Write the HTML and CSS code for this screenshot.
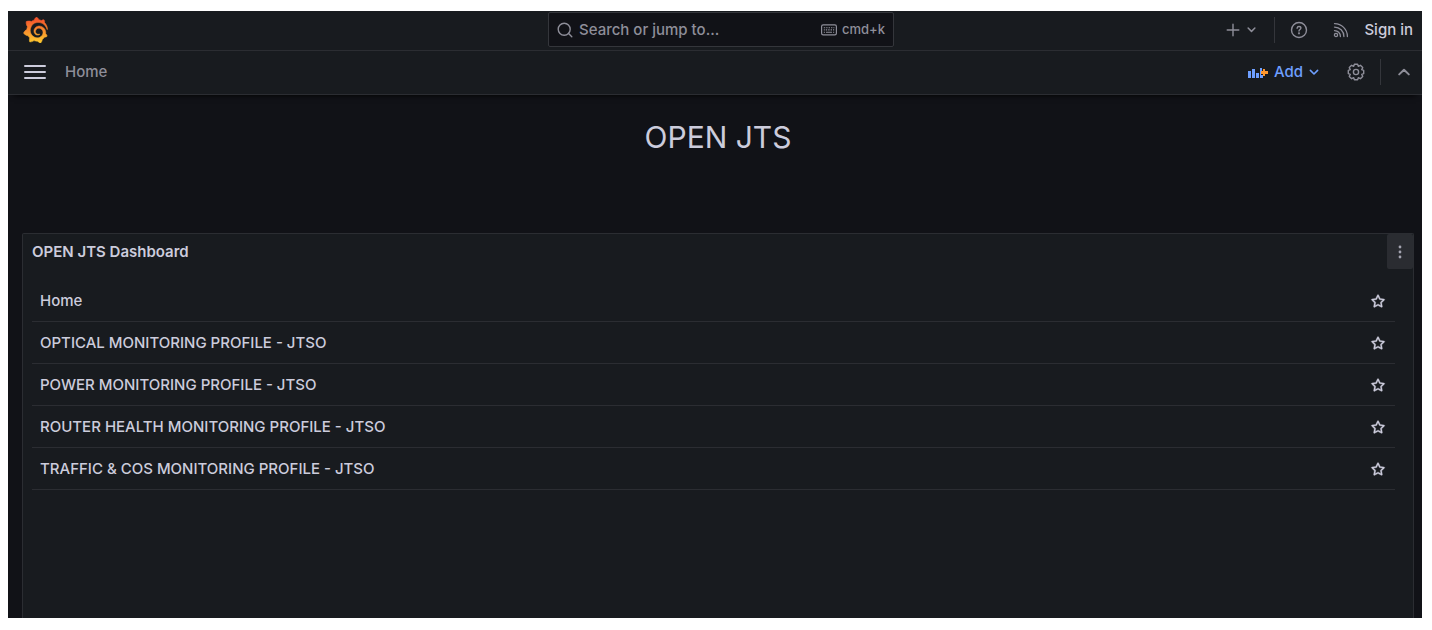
FILE: index.html
```html
<!DOCTYPE html>
<html lang="en">
<head>
<meta charset="utf-8">
<meta name="viewport" content="width=device-width, initial-scale=1">
<title>Home - Dashboards</title>
<link rel="stylesheet" href="styles.css">
</head>
<body>
<svg class="sprite" aria-hidden="true">
  <symbol id="star" viewBox="0 0 24 24"><path d="M22,9.67A1,1,0,0,0,21.14,9l-5.69-.83L12.9,3a1,1,0,0,0-1.8,0L8.55,8.16,2.86,9a1,1,0,0,0-.81.68,1,1,0,0,0,.25,1l4.13,4-1,5.68A1,1,0,0,0,6.9,21.44L12,18.77l5.1,2.67a.93.93,0,0,0,.46.12,1,1,0,0,0,.59-.19,1,1,0,0,0,.4-1l-1-5.68,4.13-4A1,1,0,0,0,22,9.67Zm-6.15,4a1,1,0,0,0-.29.88l.72,4.2-3.76-2a1.06,1.06,0,0,0-.94,0l-3.76,2,.72-4.2a1,1,0,0,0-.29-.88l-3-3,4.21-.61a1,1,0,0,0,.76-.55L12,5.7l1.88,3.82a1,1,0,0,0,.76.55l4.21.61Z" fill="currentColor" stroke="currentColor" stroke-width=".5"/></symbol>
  <symbol id="down" viewBox="0 0 16 16"><path d="M4.4 6.4 8 10l3.6-3.6" fill="none" stroke="currentColor" stroke-width="1.6" stroke-linecap="round" stroke-linejoin="round"/></symbol>
</svg>
<div class="app">
  <header class="topbar">
    <a class="logo" href="#" aria-label="Grafana">
      <svg viewBox="0 0 351 365" width="25" height="26">
        <defs><linearGradient id="flame" gradientUnits="userSpaceOnUse" x1="175" y1="400" x2="175" y2="40"><stop offset="0" stop-color="#ffd92e"/><stop offset="1" stop-color="#f5562c"/></linearGradient></defs>
        <path fill="url(#flame)" stroke="url(#flame)" stroke-width="8" d="M342,161.2c-0.6-6.1-1.6-13.1-3.6-20.9c-2-7.7-5-16.2-9.4-25c-4.4-8.8-10.1-17.9-17.5-26.8c-2.9-3.5-6.1-6.9-9.5-10.2c5.1-20.3-6.2-37.9-6.2-37.9c-19.5-1.2-31.9,6.1-36.5,9.4c-0.8-0.3-1.5-0.7-2.3-1c-3.3-1.3-6.7-2.6-10.3-3.7c-3.5-1.1-7.1-2.1-10.8-3c-3.7-0.9-7.4-1.6-11.2-2.2c-0.7-0.1-1.3-0.2-2-0.3c-8.5-27.2-32.9-38.6-32.9-38.6c-27.3,17.3-32.4,41.5-32.4,41.5s-0.1,0.5-0.3,1.4c-1.5,0.4-3,0.9-4.5,1.3c-2.1,0.6-4.2,1.4-6.2,2.2c-2.1,0.8-4.1,1.6-6.2,2.5c-4.1,1.8-8.2,3.8-12.2,6c-3.9,2.2-7.7,4.6-11.4,7.1c-0.5-0.2-1-0.4-1-0.4c-37.8-14.4-71.3,2.9-71.3,2.9c-3.1,40.2,15.1,65.5,18.7,70.1c-0.9,2.5-1.7,5-2.5,7.5c-2.8,9.1-4.9,18.4-6.2,28.1c-0.2,1.4-0.4,2.8-0.5,4.2C18.8,192.7,8.5,228,8.5,228c29.1,33.5,63.1,35.6,63.1,35.6c0,0,0.1-0.1,0.1-0.1c4.3,7.7,9.3,15,14.9,21.9c2.4,2.9,4.8,5.6,7.4,8.3c-10.6,30.4,1.5,55.6,1.5,55.6c32.4,1.2,53.7-14.2,58.2-17.7c3.2,1.1,6.5,2.1,9.8,2.9c10,2.6,20.2,4.1,30.4,4.5c2.5,0.1,5.1,0.2,7.6,0.1l1.2,0l0.8,0l1.6,0l1.6-0.1l0,0.1c15.3,21.8,42.1,24.9,42.1,24.9c19.1-20.1,20.2-40.1,20.2-44.4l0,0c0,0,0-0.1,0-0.3c0-0.4,0-0.6,0-0.6l0,0c0-0.3,0-0.6,0-0.9c4-2.8,7.8-5.8,11.4-9.1c7.6-6.9,14.3-14.8,19.9-23.3c0.5-0.8,1-1.6,1.5-2.4c21.6,1.2,36.9-13.4,36.9-13.4c-3.6-22.5-16.4-33.5-19.1-35.6l0,0c0,0-0.1-0.1-0.3-0.2c-0.2-0.1-0.2-0.2-0.2-0.2c-0.1-0.1-0.3-0.2-0.5-0.3c0.1-1.4,0.2-2.7,0.3-4.1c0.2-2.4,0.2-4.9,0.2-7.3l0-1.8l0-0.9l0-0.5l-0.1-2.1l-0.1-2c0-0.7-0.1-1.3-0.2-1.9c-0.1-0.6-0.1-1.3-0.2-1.9l-0.2-1.9l-0.3-1.9c-0.4-2.5-0.8-4.9-1.4-7.4c-2.3-9.7-6.1-18.9-11-27.2c-5-8.3-11.2-15.6-18.3-21.8c-7-6.2-14.9-11.2-23.1-14.9c-8.3-3.7-16.9-6.1-25.5-7.2c-4.3-0.6-8.6-0.8-12.9-0.7l-1.6,0l-0.9,0l-0.7,0l-1.6,0.1c-0.6,0-1.2,0.1-1.7,0.1c-2.2,0.2-4.4,0.5-6.5,0.9c-8.6,1.6-16.7,4.7-23.8,9c-7.1,4.3-13.3,9.6-18.3,15.6c-5,6-8.9,12.7-11.6,19.6c-2.7,6.9-4.2,14.1-4.6,21c-0.1,1.7-0.1,3.5-0.1,5.2c0,0.4,0,0.9,0,1.3l0.1,1.4c0.1,0.8,0.1,1.7,0.2,2.5c0.3,3.5,1,6.9,1.9,10.1c1.9,6.5,4.9,12.4,8.6,17.4c3.7,5,8.2,9.1,12.9,12.4c4.7,3.2,9.8,5.5,14.8,7c5,1.5,10,2.1,14.7,2.1c0.6,0,1.2,0,1.7,0c0.6,0,1.2,0,1.8-0.1c0.5,0,1-0.1,1.5-0.1c0.6-0.1,1.2-0.2,1.8-0.3c0.6-0.1,1.1-0.2,1.7-0.3c0.6-0.1,1.1-0.2,1.6-0.4c1.1-0.2,2.1-0.6,3.1-0.9c2-0.7,4-1.5,5.7-2.4c1.8-0.9,3.4-2,5-3c0.4-0.3,0.9-0.6,1.3-1c1.6-1.3,1.9-3.7,0.6-5.3c-1.1-1.4-3.1-1.8-4.7-0.9c-0.4,0.2-0.8,0.4-1.2,0.6c-1.4,0.7-2.8,1.3-4.3,1.8c-1.5,0.5-3.1,0.9-4.7,1.2c-0.8,0.1-1.6,0.2-2.5,0.3c-0.4,0-0.8,0.1-1.3,0.1c-0.8,0-1.6,0-2.4,0c-0.5,0-1,0-1.5-0.1l-0.5,0c-0.2,0-0.5,0-0.7-0.1c-0.5-0.1-0.9-0.1-1.4-0.2c-3.7-0.5-7.4-1.6-10.9-3.2c-3.6-1.6-7-3.8-10.1-6.6c-3.1-2.8-5.8-6.1-7.9-9.9c-2.1-3.8-3.6-8-4.3-12.4c-0.3-2.2-0.5-4.5-0.4-6.7c0-0.6,0.1-1.2,0.1-1.8l0-0.8c0-0.3,0.1-0.6,0.1-0.9c0.1-1.2,0.3-2.4,0.5-3.6c1.7-9.6,6.5-19,13.9-26.1c1.9-1.8,3.9-3.4,6-4.9c2.1-1.5,4.4-2.8,6.8-3.9c2.4-1.1,4.8-2,7.4-2.7c2.5-0.7,5.1-1.1,7.8-1.4c1.3-0.1,2.6-0.2,4-0.2l2.7,0l0.4,0l1.1,0.1c2.9,0.2,5.7,0.6,8.5,1.3c5.6,1.2,11.1,3.3,16.2,6.1c10.2,5.7,18.9,14.5,24.2,25.1c2.7,5.3,4.6,11,5.5,16.9c0.2,1.5,0.4,3,0.5,4.5l0.1,1.1l0.1,1.1c0,0.8,0,1.5,0,2.2l0,1l0,1.1c0,0.7-0.1,1.9-0.1,2.6c-0.1,1.6-0.3,3.3-0.5,4.9c-0.2,1.6-0.5,3.2-0.8,4.8c-0.3,1.6-0.7,3.2-1.1,4.7c-0.8,3.1-1.8,6.2-3,9.3c-2.4,6-5.6,11.8-9.4,17.1c-7.7,10.6-18.2,19.2-30.2,24.7c-6,2.7-12.3,4.7-18.8,5.7c-3.2,0.6-6.5,0.9-9.8,1l-5,0c-1.8,0-3.5-0.1-5.3-0.3c-7-0.5-13.9-1.8-20.7-3.7c-6.7-1.9-13.2-4.6-19.4-7.8c-12.3-6.6-23.4-15.6-32-26.5c-4.3-5.4-8.1-11.3-11.2-17.4c-3.1-6.1-5.6-12.6-7.4-19.1c-1.8-6.6-2.9-13.3-3.4-20.1l-0.1-1.3l0-6.5c0-0.8,0-1.7,0-2.5c0.1-3.3,0.4-6.8,0.8-10.2c0.4-3.4,1-6.9,1.7-10.3c0.7-3.4,1.5-6.8,2.5-10.2c1.9-6.7,4.3-13.2,7.1-19.3c5.7-12.2,13.1-23.1,22-31.8c2.2-2.2,4.5-4.2,6.9-6.2c2.4-1.9,4.9-3.7,7.5-5.4c2.5-1.7,5.2-3.2,7.9-4.6c1.3-0.7,2.7-1.4,4.1-2c1.4-0.6,2.8-1.2,4.2-1.8c2.8-1.2,5.7-2.2,8.7-3.1c1.5-0.4,3-0.9,4.4-1.3c1.5-0.4,3-0.8,4.5-1.1c1.5-0.3,3-0.7,4.6-1c0.8-0.1,1.5-0.3,2.3-0.4l2.3-0.4c0.8-0.1,1.5-0.2,2.3-0.3c1.7-0.2,3.4-0.4,5.2-0.6c0.5-0.1,1.1-0.1,1.6-0.2l2.2-0.2c0.9-0.1,1.7-0.1,2.6-0.2l2.3-0.1c0.7,0,1.5-0.1,2.2-0.1c2.9-0.1,5.9-0.1,8.8,0c5.8,0.2,11.5,0.9,17,1.9c11.1,2.1,21.5,5.6,31,10.3c9.5,4.6,17.9,10.3,25.3,16.5c0.9,0.8,1.8,1.6,2.7,2.4c1.8,1.6,3.4,3.2,5.1,4.8c0.8,0.8,1.6,1.6,2.4,2.5c3.1,3.3,6,6.6,8.6,10c5.2,6.7,9.4,13.5,12.7,19.9c0.4,0.8,0.8,1.6,1.2,2.4c0.8,1.6,1.5,3.1,2.2,4.7c0.3,0.8,0.7,1.5,1,2.3c1.2,3,2.4,5.9,3.3,8.6c1.5,4.4,2.6,8.3,3.5,11.7c0.3,1.4,1.6,2.3,3,2.1c1.5-0.1,2.6-1.3,2.6-2.8C342.6,170.4,342.5,166.1,342,161.2z"/>
      </svg>
    </a>
    <div class="search">
      <svg viewBox="0 0 16 16" width="16" height="16" fill="none" stroke="currentColor" stroke-width="1.4" stroke-linecap="round" aria-hidden="true"><circle cx="7.2" cy="7.2" r="6"/><path d="m11.6 11.6 3.2 3.2"/></svg>
      <input class="search-input" type="text" aria-label="Search or jump to" placeholder="Search or jump to...">
      <span class="shortcut">
        <svg viewBox="0 0 16 12" width="16" height="12" fill="none" stroke="currentColor" aria-hidden="true"><rect x=".6" y=".8" width="14.8" height="10" rx="1.6" stroke-width="1.2"/><path d="M2.8 3.7h1.4m1 0h1.4m1 0H9m1 0h1.4m1 0h1M2.8 5.9h1m1 0h1.4m1 0h1.4m1 0H11m1 0h1.2M2.8 8.2h1.2m1 0h6m1 0h1.2" stroke-width="1.1"/></svg>
        <kbd>cmd+k</kbd>
      </span>
    </div>
    <nav class="actions" aria-label="Account">
      <button class="icon-button new" aria-label="New">
        <svg viewBox="0 0 14 14" width="14" height="14" fill="none" stroke="currentColor" stroke-width="1.4" stroke-linecap="round"><path d="M7 1.2v11.6M1.2 7h11.6"/></svg>
        <svg width="15" height="15"><use href="#down"/></svg>
      </button>
      <span class="divider"></span>
      <button class="icon-button help" aria-label="Help">
        <svg viewBox="0 0 18 18" width="18" height="18" fill="none" stroke="currentColor" stroke-width="1.4" stroke-linecap="round"><circle cx="9" cy="9" r="7.5"/><path d="M7.1 7.2C7.3 6 8 5.5 9 5.5c1.2 0 1.9.7 1.9 1.6C10.9 8.5 9 8.5 9 10"/><circle cx="9" cy="12.3" r=".4"/></svg>
      </button>
      <button class="icon-button news" aria-label="News">
        <svg viewBox="0 0 16 16" width="16" height="16" fill="none" stroke="currentColor" stroke-width="1.3" stroke-linecap="round"><circle cx="3" cy="13" r="1.6"/><path d="M1.5 8.600a5.800 5.800 0 0 1 5.900 5.900M1.500 5.100a9.300 9.300 0 0 1 9.400 9.400M1.500 1.600a12.800 12.800 0 0 1 12.900 12.900"/></svg>
      </button>
      <a class="sign-in" href="#">Sign in</a>
    </nav>
  </header>

  <div class="toolbar">
    <button class="icon-button menu" aria-label="Open menu">
      <svg viewBox="0 0 22 14" width="22" height="14" stroke="currentColor" stroke-width="2" stroke-linecap="round"><path d="M1 1h20M1 7h20M1 13h20"/></svg>
    </button>
    <nav class="crumbs" aria-label="Breadcrumbs"><a href="#">Home</a></nav>
    <div class="tools">
      <button class="icon-button add">
        <svg viewBox="0 0 20 14" width="20" height="14" aria-hidden="true"><path fill="#6e9fff" d="M0 6h3v7H0zM4 4h3v9H4zM8 8h3v5H8zM12 3h2v3h-1v4h2v3h-3z"/><path fill="#ff9830" d="M15 4h2v2h3v3h-3v2h-2V9h-2V6h2z"/></svg>
        <span>Add</span>
        <svg width="16" height="16" aria-hidden="true"><use href="#down"/></svg>
      </button>
      <button class="icon-button settings" aria-label="Dashboard settings">
        <svg viewBox="0 0 18 18" width="18" height="18" fill="none" stroke="currentColor" stroke-width="1.4" stroke-linejoin="round"><circle cx="9" cy="9" r="2.6"/><path d="M7.400 1.300h3.200l.7 2 2.100-1 2.300 2.300-1 2.100 2 .7v3.200l-2 .7 1 2.100-2.300 2.300-2.100-1-.7 2H7.400l-.7-2-2.100 1-2.300-2.300 1-2.100-2-.7V7.400l2-.7-1-2.100 2.300-2.300 2.100 1z"/></svg>
      </button>
      <span class="divider"></span>
      <button class="icon-button collapse" aria-label="Hide top bar">
        <svg viewBox="0 0 14 10" width="14" height="10" fill="none" stroke="currentColor" stroke-width="2" stroke-linecap="round" stroke-linejoin="round"><path d="m2.200 7.400 4.800-4.600 4.800 4.600"/></svg>
      </button>
    </div>
  </div>

  <main class="dashboard">
    <h1 class="title">OPEN JTS</h1>
    <section class="panel" aria-labelledby="panel-title">
      <header class="panel-header">
        <h2 id="panel-title">OPEN JTS Dashboard</h2>
        <button class="panel-menu" aria-label="Panel menu">
          <svg viewBox="0 0 4 14" width="4" height="14" fill="currentColor"><circle cx="2" cy="2" r="1.4"/><circle cx="2" cy="7" r="1.4"/><circle cx="2" cy="12" r="1.4"/></svg>
        </button>
      </header>
      <ul class="list">
        <li><a href="#">Home</a><button class="star" aria-label="Star Home"><svg width="16" height="16"><use href="#star"/></svg></button></li>
        <li><a href="#">OPTICAL MONITORING PROFILE - JTSO</a><button class="star" aria-label="Star Optical"><svg width="16" height="16"><use href="#star"/></svg></button></li>
        <li><a href="#">POWER MONITORING PROFILE - JTSO</a><button class="star" aria-label="Star Power"><svg width="16" height="16"><use href="#star"/></svg></button></li>
        <li><a href="#">ROUTER HEALTH MONITORING PROFILE - JTSO</a><button class="star" aria-label="Star Router Health"><svg width="16" height="16"><use href="#star"/></svg></button></li>
        <li><a href="#">TRAFFIC &amp; COS MONITORING PROFILE - JTSO</a><button class="star" aria-label="Star Traffic"><svg width="16" height="16"><use href="#star"/></svg></button></li>
      </ul>
    </section>
  </main>
</div>
</body>
</html>
```

FILE: styles.css
```css
:root {
  --canvas: #111217;
  --surface: #181b1f;
  --line: #2b2d32;
  --text: #ccccdc;
  --muted: #8e8e99;
  --link: #6e9fff;
}

* { box-sizing: border-box; }

body {
  display: flex;
  min-height: 100vh;
  margin: 0;
  padding: 11px 10px 12px 8px;
  background: #fff;
  color: var(--text);
  font: 500 15px/22px Inter, "Liberation Sans", sans-serif;
}

a { color: inherit; text-decoration: none; }
svg { display: block; flex: none; }
.sprite { position: absolute; width: 0; height: 0; }

button {
  margin: 0;
  padding: 0;
  border: 0;
  background: none;
  color: inherit;
  font: inherit;
  cursor: pointer;
}

.app {
  display: flex;
  flex: 1;
  flex-direction: column;
  min-width: 0;
  background: var(--canvas);
}

.topbar {
  display: grid;
  grid-template-columns: minmax(0, 3fr) minmax(0, 2fr) minmax(0, 3fr);
  align-items: center;
  height: 40px;
  padding: 0 9px 2px 21px;
  border-bottom: 1px solid var(--line);
  background: var(--surface);
}

.logo { justify-self: start; margin-left: -6px; }

.search {
  display: flex;
  align-items: center;
  gap: 6px;
  height: 35px;
  padding: 0 8px;
  border: 1px solid #34363b;
  border-radius: 2px;
  background: var(--canvas);
  color: var(--muted);
}

.search-input {
  flex: 1;
  min-width: 0;
  padding: 0;
  border: 0;
  outline: 0;
  background: none;
  color: var(--text);
  font: inherit;
}

.search-input::placeholder { color: var(--muted); opacity: 1; }

.shortcut { display: flex; align-items: center; gap: 5px; }
.shortcut kbd { padding-bottom: 2px; font: 500 13px/20px Inter, "Liberation Sans", sans-serif; }

.actions, .tools {
  display: flex;
  align-items: center;
  justify-content: flex-end;
  color: var(--muted);
}

.icon-button { display: flex; align-items: center; }
.divider { width: 1px; height: 26px; background: #34363b; }

.new { gap: 4px; margin-right: 15px; }
.help { margin: 0 25px 0 15px; }
.news { margin-right: 15px; }
.sign-in { color: var(--text); }

.toolbar {
  display: flex;
  align-items: center;
  height: 44px;
  padding: 0 11px 1px 16px;
  border-bottom: 1px solid var(--line);
  background: var(--surface);
  box-shadow: 0 6px 6px -6px #000;
}

.menu { color: var(--text); }
.crumbs { margin-left: 19px; color: var(--muted); }
.tools { margin-left: auto; }
.add { gap: 6px; margin-right: 25px; color: var(--link); }
.add svg:last-child { margin-left: -3px; }
.settings { margin-right: 15px; }
.collapse { margin-left: 16px; }

.dashboard {
  display: flex;
  flex: 1;
  flex-direction: column;
  padding: 22px 8px 0 14px;
}

.title {
  margin: 0 0 76px;
  font-size: 30px;
  font-weight: 400;
  line-height: 40px;
  text-align: center;
}

.panel {
  flex: 1;
  border: 1px solid var(--line);
  border-bottom: 0;
  border-radius: 2px 2px 0 0;
  background: var(--surface);
}

.panel-header {
  display: flex;
  align-items: center;
  justify-content: space-between;
  padding-left: 9px;
}

.panel-header h2 { margin: 0; font-size: 15px; font-weight: 600; line-height: 22px; }

.panel-menu {
  display: grid;
  place-items: center;
  width: 26px;
  height: 35px;
  border-radius: 2px;
  background: #2a2c31;
  color: #a3a3b0;
}

.list { margin: 0; padding: 11px 18px 0 9px; list-style: none; }

.list li {
  display: flex;
  align-items: center;
  justify-content: space-between;
  height: 42px;
  padding: 0 9px 0 8px;
  border-bottom: 1px solid var(--line);
}
```
